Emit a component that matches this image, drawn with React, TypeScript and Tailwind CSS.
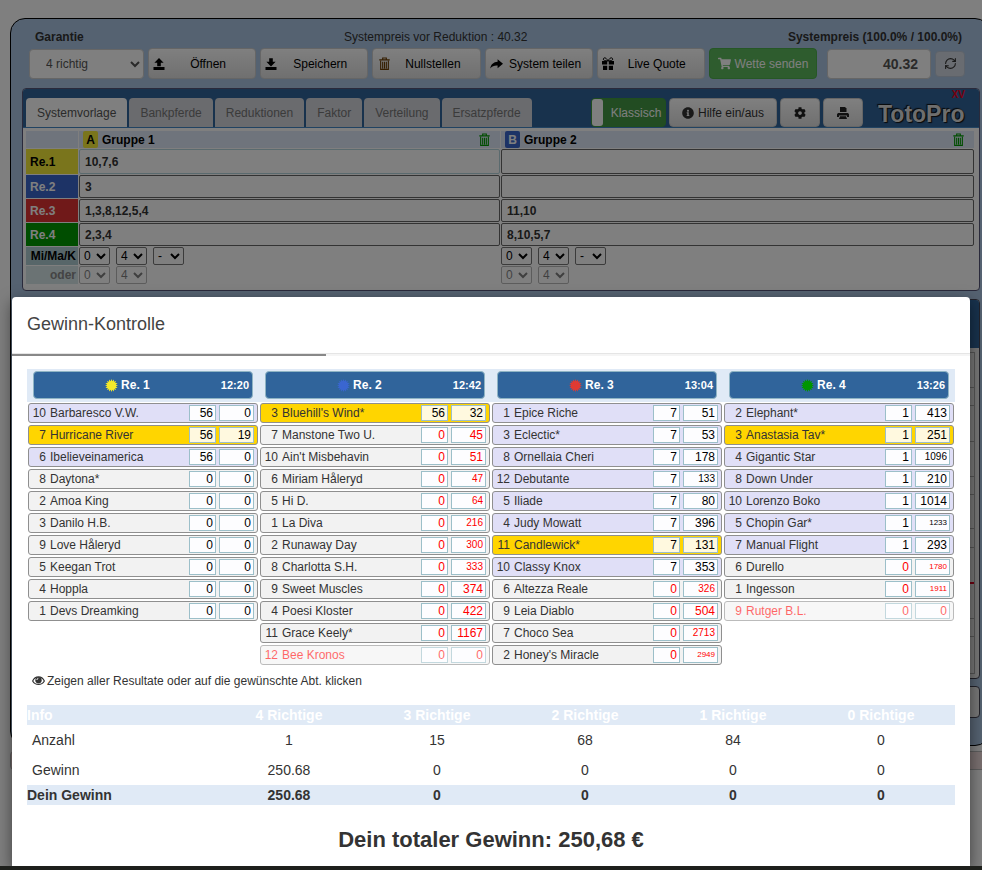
import type { ReactNode } from "react";
import { FaCog, FaInfoCircle, FaShoppingCart } from "react-icons/fa";
import { RefreshCw } from "lucide-react";

type Horse = {
  no: number;
  name: string;
  tips: number;
  odds: number;
  kind?: "picked" | "winner" | "out";
  size?: "sm" | "xs";
  red?: boolean;
};

type Race = { title: string; time: string; color: string; horses: Horse[] };

const races: Race[] = [
  {
    title: "Re. 1",
    time: "12:20",
    color: "#f4ea2a",
    horses: [
      { no: 10, name: "Barbaresco V.W.", tips: 56, odds: 0, kind: "picked" },
      { no: 7, name: "Hurricane River", tips: 56, odds: 19, kind: "winner" },
      { no: 6, name: "Ibelieveinamerica", tips: 56, odds: 0, kind: "picked" },
      { no: 8, name: "Daytona*", tips: 0, odds: 0 },
      { no: 2, name: "Amoa King", tips: 0, odds: 0 },
      { no: 3, name: "Danilo H.B.", tips: 0, odds: 0 },
      { no: 9, name: "Love Håleryd", tips: 0, odds: 0 },
      { no: 5, name: "Keegan Trot", tips: 0, odds: 0 },
      { no: 4, name: "Hoppla", tips: 0, odds: 0 },
      { no: 1, name: "Devs Dreamking", tips: 0, odds: 0 },
    ],
  },
  {
    title: "Re. 2",
    time: "12:42",
    color: "#3a66d0",
    horses: [
      { no: 3, name: "Bluehill's Wind*", tips: 56, odds: 32, kind: "winner" },
      { no: 7, name: "Manstone Two U.", tips: 0, odds: 45, red: true },
      { no: 10, name: "Ain't Misbehavin", tips: 0, odds: 51, red: true },
      { no: 6, name: "Miriam Håleryd", tips: 0, odds: 47, red: true, size: "sm" },
      { no: 5, name: "Hi D.", tips: 0, odds: 64, red: true, size: "sm" },
      { no: 1, name: "La Diva", tips: 0, odds: 216, red: true, size: "sm" },
      { no: 2, name: "Runaway Day", tips: 0, odds: 300, red: true, size: "sm" },
      { no: 8, name: "Charlotta S.H.", tips: 0, odds: 333, red: true, size: "sm" },
      { no: 9, name: "Sweet Muscles", tips: 0, odds: 374, red: true },
      { no: 4, name: "Poesi Kloster", tips: 0, odds: 422, red: true },
      { no: 11, name: "Grace Keely*", tips: 0, odds: 1167, red: true },
      { no: 12, name: "Bee Kronos", tips: 0, odds: 0, kind: "out", red: true },
    ],
  },
  {
    title: "Re. 3",
    time: "13:04",
    color: "#e03a33",
    horses: [
      { no: 1, name: "Epice Riche", tips: 7, odds: 51, kind: "picked" },
      { no: 3, name: "Eclectic*", tips: 7, odds: 53, kind: "picked" },
      { no: 8, name: "Ornellaia Cheri", tips: 7, odds: 178, kind: "picked" },
      { no: 12, name: "Debutante", tips: 7, odds: 133, kind: "picked", size: "sm" },
      { no: 5, name: "Iliade", tips: 7, odds: 80, kind: "picked" },
      { no: 4, name: "Judy Mowatt", tips: 7, odds: 396, kind: "picked" },
      { no: 11, name: "Candlewick*", tips: 7, odds: 131, kind: "winner" },
      { no: 10, name: "Classy Knox", tips: 7, odds: 353, kind: "picked" },
      { no: 6, name: "Altezza Reale", tips: 0, odds: 326, red: true, size: "sm" },
      { no: 9, name: "Leia Diablo", tips: 0, odds: 504, red: true },
      { no: 7, name: "Choco Sea", tips: 0, odds: 2713, red: true, size: "sm" },
      { no: 2, name: "Honey's Miracle", tips: 0, odds: 2949, red: true, size: "xs" },
    ],
  },
  {
    title: "Re. 4",
    time: "13:26",
    color: "#009600",
    horses: [
      { no: 2, name: "Elephant*", tips: 1, odds: 413, kind: "picked" },
      { no: 3, name: "Anastasia Tav*", tips: 1, odds: 251, kind: "winner" },
      { no: 4, name: "Gigantic Star", tips: 1, odds: 1096, kind: "picked", size: "sm" },
      { no: 8, name: "Down Under", tips: 1, odds: 210, kind: "picked" },
      { no: 10, name: "Lorenzo Boko", tips: 1, odds: 1014, kind: "picked" },
      { no: 5, name: "Chopin Gar*", tips: 1, odds: 1233, kind: "picked", size: "xs" },
      { no: 7, name: "Manual Flight", tips: 1, odds: 293, kind: "picked" },
      { no: 6, name: "Durello", tips: 0, odds: 1780, red: true, size: "xs" },
      { no: 1, name: "Ingesson", tips: 0, odds: 1911, red: true, size: "xs" },
      { no: 9, name: "Rutger B.L.", tips: 0, odds: 0, kind: "out", red: true },
    ],
  },
];

const picks = [
  { label: "Re.1", color: "bg-[#f4ea38] text-black", a: "10,7,6", b: "" },
  { label: "Re.2", color: "bg-[#3a66cc] text-white", a: "3", b: "" },
  { label: "Re.3", color: "bg-[#e03333] text-white", a: "1,3,8,12,5,4", b: "11,10" },
  { label: "Re.4", color: "bg-[#009a00] text-white", a: "2,3,4", b: "8,10,5,7" },
];

const tabs = ["Systemvorlage", "Bankpferde", "Reduktionen", "Faktor", "Verteilung", "Ersatzpferde"];

const hits = ["4 Richtige", "3 Richtige", "2 Richtige", "1 Richtige", "0 Richtige"];

function UploadIcon() {
  return (
    <svg viewBox="0 0 12 12" className="size-3" fill="currentColor">
      <path d="M6 0l4.6 4.8H7.8v3.4H4.2V4.8H1.4zM.5 9h11v3H.5z" />
    </svg>
  );
}

function DownloadIcon() {
  return (
    <svg viewBox="0 0 12 12" className="size-3" fill="currentColor">
      <path d="M4.2.2h3.6v3.6h2.8L6 8.5 1.4 3.8h2.8zM.5 9h11v3H.5z" />
    </svg>
  );
}

function TrashIcon({ className }: { className: string }) {
  return (
    <svg viewBox="0 0 12 14" className={className} fill="none" stroke="currentColor">
      <path d="M.3 3h11.4M4 2.8V1h4v1.8M1.8 4v9.4h8.4V4M4 5v7.5M6 5v7.5M8 5v7.5" strokeWidth="1.2" />
    </svg>
  );
}

function ShareIcon() {
  return (
    <svg viewBox="0 0 13 12" className="h-3 w-[13px]" fill="currentColor">
      <path d="M7.6 1.2L13 5.8l-5.4 4.4V7.6C4.6 7.4 2.2 8 .3 10.6.8 6.4 3.6 4 7.6 3.8z" />
    </svg>
  );
}

function GiftIcon() {
  return (
    <svg viewBox="0 0 12 13" className="h-[13px] w-3">
      <path
        d="M0 4h5.2v3.4H0zM6.8 4H12v3.4H6.8zM1 8.8h4.2V13H1zM6.8 8.8H11V13H6.8z"
        fill="currentColor"
      />
      <path
        d="M6 4C4.8 1.6 3.5.6 2.2.9 1 1.3 1 3 2.4 3.6zM6 4C7.2 1.6 8.5.6 9.8.9c1.2.4 1.2 2.1-.2 2.7z"
        fill="none"
        stroke="currentColor"
      />
    </svg>
  );
}

function PrintIcon() {
  return (
    <svg viewBox="0 0 12 12" className="size-3" fill="currentColor">
      <path d="M3 0h5l1.5 1.5V5H3z" />
      <path d="M1 6h10l1 1.2V10h-2V8.4H2V10H0V7.2zM3 9.2h6L10 12H2z" />
    </svg>
  );
}

function EyeIcon() {
  return (
    <svg viewBox="0 0 14 12" className="h-3 w-[13px]">
      <path d="M.7 6C3.6.2 10.4.2 13.3 6 10.4 11 3.6 11 .7 6z" fill="#fff" stroke="currentColor" strokeWidth="1.3" />
      <circle cx="7" cy="5.2" r="3.4" fill="currentColor" />
      <path d="M5.2 4.9a1.8 1.8 0 0 1 1.6-1.7" stroke="#fff" fill="none" />
    </svg>
  );
}

function Burst({ color }: { color: string }) {
  const points = Array.from({ length: 32 }, (_, i) => {
    const r = i % 2 ? 4.4 : 6.5;
    const a = (i * Math.PI) / 16;
    return `${6.5 + r * Math.cos(a)},${6.5 + r * Math.sin(a)}`;
  }).join(" ");
  return (
    <svg viewBox="0 0 13 13" className="size-[13px]">
      <polygon points={points} fill={color} />
    </svg>
  );
}

function ToolButton({ icon, children }: { icon: ReactNode; children: ReactNode }) {
  return (
    <button className="flex h-[31px] flex-1 items-center rounded-[4px] border border-[#ccc] bg-linear-to-b from-white to-[#e0e0e0] px-1 whitespace-nowrap text-black">
      {icon}
      <span className="flex-1 text-center">{children}</span>
    </button>
  );
}

function SmallSelect({ value, label, disabled }: { value: string; label: string; disabled?: boolean }) {
  return (
    <select
      aria-label={label}
      disabled={disabled}
      className="h-[18px] w-[31px] rounded-[2px] border border-[#767676] bg-white text-[12px] leading-4 font-normal text-black disabled:opacity-50"
    >
      <option>{value}</option>
    </select>
  );
}

function GroupHead({ letter, name, color }: { letter: string; name: string; color: string }) {
  return (
    <div className="flex h-[17px] items-center bg-[#dfe9f8] pr-2.5 pl-1">
      <span className={`mr-1 flex h-[17px] w-[15px] items-center justify-center rounded-[2px] ${color}`}>{letter}</span>
      {name}
      <button aria-label={`${name} löschen`} className="ml-auto text-[#009a00]">
        <TrashIcon className="h-[13px] w-[11px]" />
      </button>
    </div>
  );
}

function PickInput({ value, label, light }: { value: string; label: string; light?: boolean }) {
  return (
    <input
      aria-label={label}
      defaultValue={value}
      className={`w-full min-w-0 rounded-[2px] border bg-white px-[5px] text-[12px] font-bold text-[#333] ${light ? "border-[#b5d5dc]" : "border-[#666]"}`}
    />
  );
}

function Background() {
  return (
    <div className="pt-[18px] pl-2.5">
      <div className="-mr-2 h-[728px] rounded-[15px] border border-black bg-[#aac4e2] pr-[9px] pl-[11px]">
        <div className="pr-[15px] pl-[7px]">
          <div className="flex h-[29px] items-end pr-[3px] pb-[3px] pl-1.5 text-[#333]">
            <label htmlFor="garantie" className="w-[309px] font-bold">Garantie</label>
            <span>Systempreis vor Reduktion : 40.32</span>
            <label htmlFor="preis" className="ml-auto font-bold">Systempreis (100.0% / 100.0%)</label>
          </div>
          <div className="flex h-[31px] items-center gap-1">
            <select
              id="garantie"
              className="h-[30px] w-[115px] rounded-[4px] border border-[#ccc] bg-white pl-3 text-[12px] text-[#555]"
            >
              <option>4 richtig</option>
            </select>
            <ToolButton icon={<UploadIcon />}>Öffnen</ToolButton>
            <ToolButton icon={<DownloadIcon />}>Speichern</ToolButton>
            <ToolButton icon={<TrashIcon className="ml-0.5 h-[13px] w-[11px] text-[#6a3c00]" />}>Nullstellen</ToolButton>
            <ToolButton icon={<ShareIcon />}>System teilen</ToolButton>
            <ToolButton icon={<GiftIcon />}>Live Quote</ToolButton>
            <button className="flex h-[31px] flex-1 items-center justify-center gap-1 rounded-[4px] border border-[#4cae4c] bg-[#5cb85c] px-1 whitespace-nowrap text-white">
              <FaShoppingCart className="size-[13px]" />
              Wette senden
            </button>
            <input
              id="preis"
              defaultValue="40.32"
              className="ml-1.5 h-[30px] w-[104px] rounded-[4px] border border-[#ccc] bg-white px-3 text-right text-[14px] font-bold text-[#555]"
            />
            <button
              aria-label="Aktualisieren"
              className="flex h-[26px] w-[30px] items-center justify-center rounded-[4px] border border-[#b8c4d4] bg-[#d3d9e2] text-[#333]"
            >
              <RefreshCw className="size-[13px]" />
            </button>
          </div>
        </div>

        <div className="mt-[9px] rounded-[4px] border border-[#557] bg-white">
          <div className="flex h-[39px] items-end gap-[3px] rounded-t-[3px] border-b border-[#4386c4] bg-[#30649b] pl-[3px]">
            <div className="flex gap-0.5">
              {tabs.map((tab, i) => (
                <button
                  key={tab}
                  className={`h-[29px] rounded-t-[4px] px-[11px] ${i === 0 ? "bg-white text-[#555]" : "bg-[#d4d6dc] text-[#777]"}`}
                >
                  {tab}
                </button>
              ))}
            </div>
            <button className="ml-auto flex h-[29px] w-[75px] items-center rounded-[4px] border border-[#3f9a3f] bg-[#459945] text-white">
              <span className="h-[27px] w-[11px] rounded-[3px] bg-white" />
              <span className="flex-1 pl-1 text-center">Klassisch</span>
            </button>
            <button className="flex h-[29px] w-[108px] items-center justify-center gap-1 rounded-[4px] border border-[#ccc] bg-linear-to-b from-white to-[#e0e0e0] text-[#333]">
              <FaInfoCircle className="size-3" />
              Hilfe ein/aus
            </button>
            <button
              aria-label="Einstellungen"
              className="flex h-[29px] w-10 items-center justify-center rounded-[4px] border border-[#ccc] bg-linear-to-b from-white to-[#e0e0e0] text-[#222]"
            >
              <FaCog className="size-3" />
            </button>
            <button
              aria-label="Drucken"
              className="flex h-[29px] w-10 items-center justify-center rounded-[4px] border border-[#ccc] bg-linear-to-b from-white to-[#e0e0e0] text-[#222]"
            >
              <PrintIcon />
            </button>
            <div className="ml-3 flex h-[38px] w-[101px] flex-col font-bold">
              <span className="mr-3.5 self-end text-[10px] leading-3 text-[#f00020]">XV</span>
              <span className="text-[23px] leading-[26px] text-[#ddd] [text-shadow:1px_1px_1px_#111,-1px_-1px_1px_#111]">
                TotoPro
              </span>
            </div>
          </div>
          <div className="grid grid-cols-[52px_421fr_473fr] gap-px pt-[3px] pr-[5px] pb-1.5 pl-[3px] font-bold text-black">
            <div className="bg-[#dfe9f8]" />
            <GroupHead letter="A" name="Gruppe 1" color="bg-[#f4ea38]" />
            <GroupHead letter="B" name="Gruppe 2" color="bg-[#3a66cc] text-white" />
            {picks.map((row, i) => (
              <div key={row.label} className={`col-span-3 grid grid-cols-subgrid ${i === 0 ? "h-[25px]" : "h-[23px]"}`}>
                <div className={`flex items-center pl-1 ${row.color}`}>{row.label}</div>
                <PickInput value={row.a} label={`${row.label} Gruppe 1`} light={i === 0} />
                <PickInput value={row.b} label={`${row.label} Gruppe 2`} />
              </div>
            ))}
            <div className="flex items-center justify-end bg-[#aecdd2] pr-0.5">Mi/Ma/K</div>
            {["Gruppe 1", "Gruppe 2"].map((g) => (
              <div key={g} className="flex gap-1.5">
                <SmallSelect value="0" label={`${g} Minimum`} />
                <SmallSelect value="4" label={`${g} Maximum`} />
                <SmallSelect value="-" label={`${g} K`} />
              </div>
            ))}
            <div className="flex items-center justify-end bg-[#d6e6e9] pr-0.5 text-[#888]">oder</div>
            {["Gruppe 1", "Gruppe 2"].map((g) => (
              <div key={g} className="flex gap-1.5">
                <SmallSelect value="0" label={`${g} oder Minimum`} disabled />
                <SmallSelect value="4" label={`${g} oder Maximum`} disabled />
              </div>
            ))}
          </div>
        </div>

        <div className="mt-2 h-[380px] rounded-[4px] border border-[#445] bg-[#eee]">
          <div className="h-12 rounded-t-[3px] bg-[#30649b]" />
          <div className="mx-1 mt-1 grid h-[322px] grid-rows-[35fr_18fr_36fr_35fr_18fr_35fr_19fr_36fr_35fr_18fr_36fr] divide-y divide-[#aaa] border border-[#aaa]">
            <div /><div /><div /><div /><div /><div /><div />
            <div className="border-b-2 border-[#e00020]" />
            <div /><div /><div />
          </div>
        </div>
        <div className="mt-[7px] h-8 rounded-[4px] border border-[#445] bg-[#eee]" />
      </div>
      <div className="mt-[5px] -mr-2 h-[19px] rounded-[4px] border border-[#bbb] bg-[#f2dede]" />
    </div>
  );
}

const rowStyle = {
  picked: "bg-[#e0dff7]",
  winner: "bg-[#ffd500]",
  out: "bg-[#f2f2f2] opacity-60",
  plain: "bg-[#f2f2f2]",
};

function HorseRow({ horse }: { horse: Horse }) {
  const box = `h-4 border border-[#9cbfc9] px-0.5 text-right ${horse.kind === "winner" ? "bg-[#fff9df]" : "bg-[#fdfdff]"} ${horse.red ? "text-[#f00]" : "text-black"}`;
  return (
    <li
      className={`flex h-5 items-center rounded-[3px] border border-[#8f8f8f] pr-[3px] ${rowStyle[horse.kind ?? "plain"]} ${horse.kind === "out" ? "text-[#f00]" : "text-[#333]"}`}
    >
      <span className="w-[17px] text-right">{horse.no}</span>
      <span className="ml-1 flex-1 truncate">{horse.name}</span>
      <input readOnly aria-label={`${horse.name} Tipps`} value={horse.tips} className={`w-[27px] text-[12px] ${box}`} />
      <input
        readOnly
        aria-label={`${horse.name} Quote`}
        value={horse.odds}
        className={`ml-[3px] w-[35px] ${horse.size === "xs" ? "text-[8px]" : horse.size === "sm" ? "text-[10px]" : "text-[12px]"} ${box}`}
      />
    </li>
  );
}

function RaceColumn({ race }: { race: Race }) {
  return (
    <section>
      <div className="h-[33px] bg-[#e0eaf6] px-1.5 pt-0.5">
        <button className="flex h-7 w-full items-center rounded-[4px] border border-[#8fb4c4] bg-[#30649b] pr-[3px] font-bold text-white">
          <span className="flex flex-1 items-center justify-center gap-[3px]">
            <Burst color={race.color} />
            {race.title}
          </span>
          <span className="text-[11px]">{race.time}</span>
        </button>
      </div>
      <ul className="mx-px mt-px flex flex-col gap-0.5">
        {race.horses.map((horse) => (
          <HorseRow key={horse.no} horse={horse} />
        ))}
      </ul>
    </section>
  );
}

function ResultTable() {
  return (
    <table className="w-full table-fixed text-center text-[14px] leading-5 text-[#333]">
      <thead className="bg-[#e0eaf6] text-white">
        <tr>
          <th className="w-[188px] text-left">Info</th>
          {hits.map((hit) => (
            <th key={hit}>{hit}</th>
          ))}
        </tr>
      </thead>
      <tbody>
        <tr className="h-[30px]">
          <td className="pl-[5px] text-left">Anzahl</td>
          <td>1</td>
          <td>15</td>
          <td>68</td>
          <td>84</td>
          <td>0</td>
        </tr>
        <tr className="h-[30px]">
          <td className="pl-[5px] text-left">Gewinn</td>
          <td>250.68</td>
          <td>0</td>
          <td>0</td>
          <td>0</td>
          <td>0</td>
        </tr>
      </tbody>
      <tfoot className="bg-[#e0eaf6] font-bold">
        <tr>
          <td className="text-left">Dein Gewinn</td>
          <td>250.68</td>
          <td>0</td>
          <td>0</td>
          <td>0</td>
          <td>0</td>
        </tr>
      </tfoot>
    </table>
  );
}

export default function App() {
  return (
    <div className="relative min-h-screen overflow-hidden bg-white font-['Liberation_Sans',Arial,sans-serif] text-[12px] leading-4">
      <Background />
      <div className="absolute inset-0 flex flex-col bg-black/50 pt-[297px]">
        <div
          role="dialog"
          aria-labelledby="dialog-title"
          className="mx-3 flex-1 rounded-t-[4px] bg-white shadow-[0_5px_15px_rgba(0,0,0,0.5)]"
        >
          <h4 id="dialog-title" className="flex h-[57px] items-center border-b border-[#e5e5e5] px-[15px] pb-0.5 text-[18px] text-[#444]">
            Gewinn-Kontrolle
          </h4>
          <div className="h-0.5 bg-[#f5f5f5]">
            <div className="h-0.5 w-[314px] bg-[#888]" />
          </div>
          <div className="px-[15px] pt-[13px]">
            <div className="grid grid-cols-4">
              {races.map((race) => (
                <RaceColumn key={race.title} race={race} />
              ))}
            </div>
            <button className="mt-2 mb-4 flex items-center gap-0.5 pl-[5px] text-[#333]">
              <EyeIcon />
              Zeigen aller Resultate oder auf die gewünschte Abt. klicken
            </button>
            <ResultTable />
            <h3 className="mt-5 text-center text-[22px] leading-[30px] font-bold text-[#333]">
              Dein totaler Gewinn: 250,68 €
            </h3>
          </div>
        </div>
        <div className="relative h-1 bg-[#1e201c]" />
      </div>
    </div>
  );
}
